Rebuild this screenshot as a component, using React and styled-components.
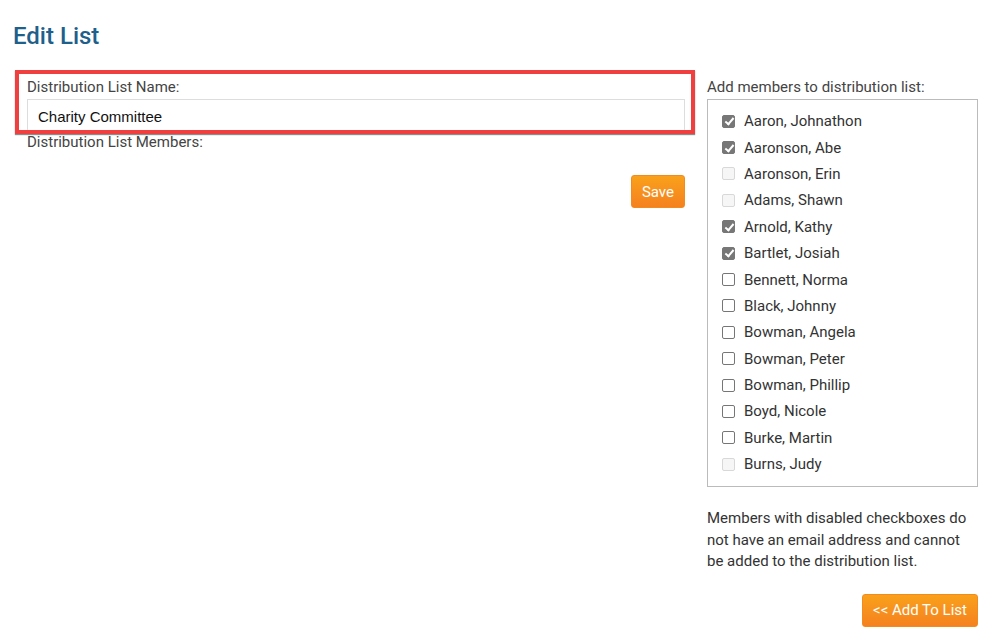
import React from "react";
import styled, { createGlobalStyle } from "styled-components";

const MEMBERS = [
  { name: "Aaron, Johnathon", checked: true, disabled: true },
  { name: "Aaronson, Abe", checked: true, disabled: true },
  { name: "Aaronson, Erin", checked: false, disabled: true },
  { name: "Adams, Shawn", checked: false, disabled: true },
  { name: "Arnold, Kathy", checked: true, disabled: true },
  { name: "Bartlet, Josiah", checked: true, disabled: true },
  { name: "Bennett, Norma", checked: false, disabled: false },
  { name: "Black, Johnny", checked: false, disabled: false },
  { name: "Bowman, Angela", checked: false, disabled: false },
  { name: "Bowman, Peter", checked: false, disabled: false },
  { name: "Bowman, Phillip", checked: false, disabled: false },
  { name: "Boyd, Nicole", checked: false, disabled: false },
  { name: "Burke, Martin", checked: false, disabled: false },
  { name: "Burns, Judy", checked: false, disabled: true },
];

export default function App() {
  return (
    <>
      <GlobalStyle />
      <Page>
        <Title>Edit List</Title>
        <Columns>
          <LeftColumn>
            <NameGroup>
              <Highlight />
              <Label>Distribution List Name:</Label>
              <NameInput defaultValue="Charity Committee" />
            </NameGroup>
            <Label $top={1}>Distribution List Members:</Label>
            <ButtonRow $top={23}>
              <OrangeButton>Save</OrangeButton>
            </ButtonRow>
          </LeftColumn>
          <RightColumn>
            <Label>Add members to distribution list:</Label>
            <MemberBox>
              {MEMBERS.map((m) => (
                <MemberRow key={m.name}>
                  <Check
                    type="checkbox"
                    defaultChecked={m.checked}
                    disabled={m.disabled && !m.checked}
                    $locked={m.checked}
                  />
                  {m.name}
                </MemberRow>
              ))}
            </MemberBox>
            <Note>
              Members with disabled checkboxes do not have an email address and
              cannot be added to the distribution list.
            </Note>
            <ButtonRow $top={21}>
              <OrangeButton>&lt;&lt; Add To List</OrangeButton>
            </ButtonRow>
          </RightColumn>
        </Columns>
      </Page>
    </>
  );
}

const GlobalStyle = createGlobalStyle`
  body {
    margin: 0;
    background: #fff;
    font-family: Roboto, "Liberation Sans", Arial, sans-serif;
    color: #444;
  }
`;

const Page = styled.div`
  padding: 0 14px 0 13px;
`;

const Title = styled.h1`
  margin: 24px 0 29px;
  font-size: 24px;
  line-height: 24px;
  font-weight: 500;
  color: #1f5f8b;
`;

const Columns = styled.div`
  display: flex;
  gap: 22px;
  margin-left: 14px;
`;

const LeftColumn = styled.div`
  width: 658px;
`;

const RightColumn = styled.div`
  width: 271px;
`;

const NameGroup = styled.div`
  position: relative;
`;

const Highlight = styled.div`
  position: absolute;
  top: -7px;
  left: -12px;
  right: -10px;
  bottom: -1px;
  border: 4px solid #ef3f3f;
  box-shadow: 0 1px 1px rgba(0, 0, 0, 0.45);
  pointer-events: none;
  z-index: 1;
`;

const Label = styled.div`
  font-size: 15px;
  line-height: 20px;
  margin: ${(p) => p.$top || 0}px 0 2px;
  color: #444;
`;

const NameInput = styled.input`
  display: block;
  box-sizing: border-box;
  width: 100%;
  height: 34px;
  margin: 0 0 -2px;
  padding: 0 10px;
  border: 1px solid #ddd;
  font-family: "Liberation Sans", Arial, sans-serif;
  font-size: 15px;
  color: #111;
  outline: none;
`;

const ButtonRow = styled.div`
  display: flex;
  justify-content: flex-end;
  margin-top: ${(p) => p.$top}px;
`;

const OrangeButton = styled.button`
  height: 33px;
  padding: 0 10px;
  border: 1px solid #f28a1d;
  border-radius: 3px;
  background: linear-gradient(#f9a11b, #f5811f);
  color: #fff;
  font-family: Roboto, "Liberation Sans", sans-serif;
  font-size: 15px;
  cursor: pointer;
`;

const MemberBox = styled.div`
  box-sizing: border-box;
  border: 1px solid #bbb;
  padding: 8px 14px 9px;
`;

const MemberRow = styled.label`
  display: flex;
  align-items: center;
  height: 26.4px;
  font-size: 15px;
  color: #333;
`;

const Check = styled.input`
  appearance: none;
  position: relative;
  box-sizing: border-box;
  width: 13px;
  height: 13px;
  margin: 0 9px 0 0;
  border: 1px solid #767676;
  border-radius: 2px;
  background: #fff;
  pointer-events: ${(p) => (p.$locked ? "none" : "auto")};

  &:disabled {
    border-color: #d8d8d8;
    background: #f6f6f6;
  }

  &:checked {
    border-color: #777;
    background: #777;
  }

  &:checked::after {
    content: "";
    position: absolute;
    left: 3.5px;
    top: 0.5px;
    width: 3px;
    height: 7px;
    border: solid #fff;
    border-width: 0 2px 2px 0;
    transform: rotate(40deg);
  }
`;

const Note = styled.p`
  margin: 21px 0 0;
  font-size: 15px;
  line-height: 21.5px;
  color: #333;
`;
